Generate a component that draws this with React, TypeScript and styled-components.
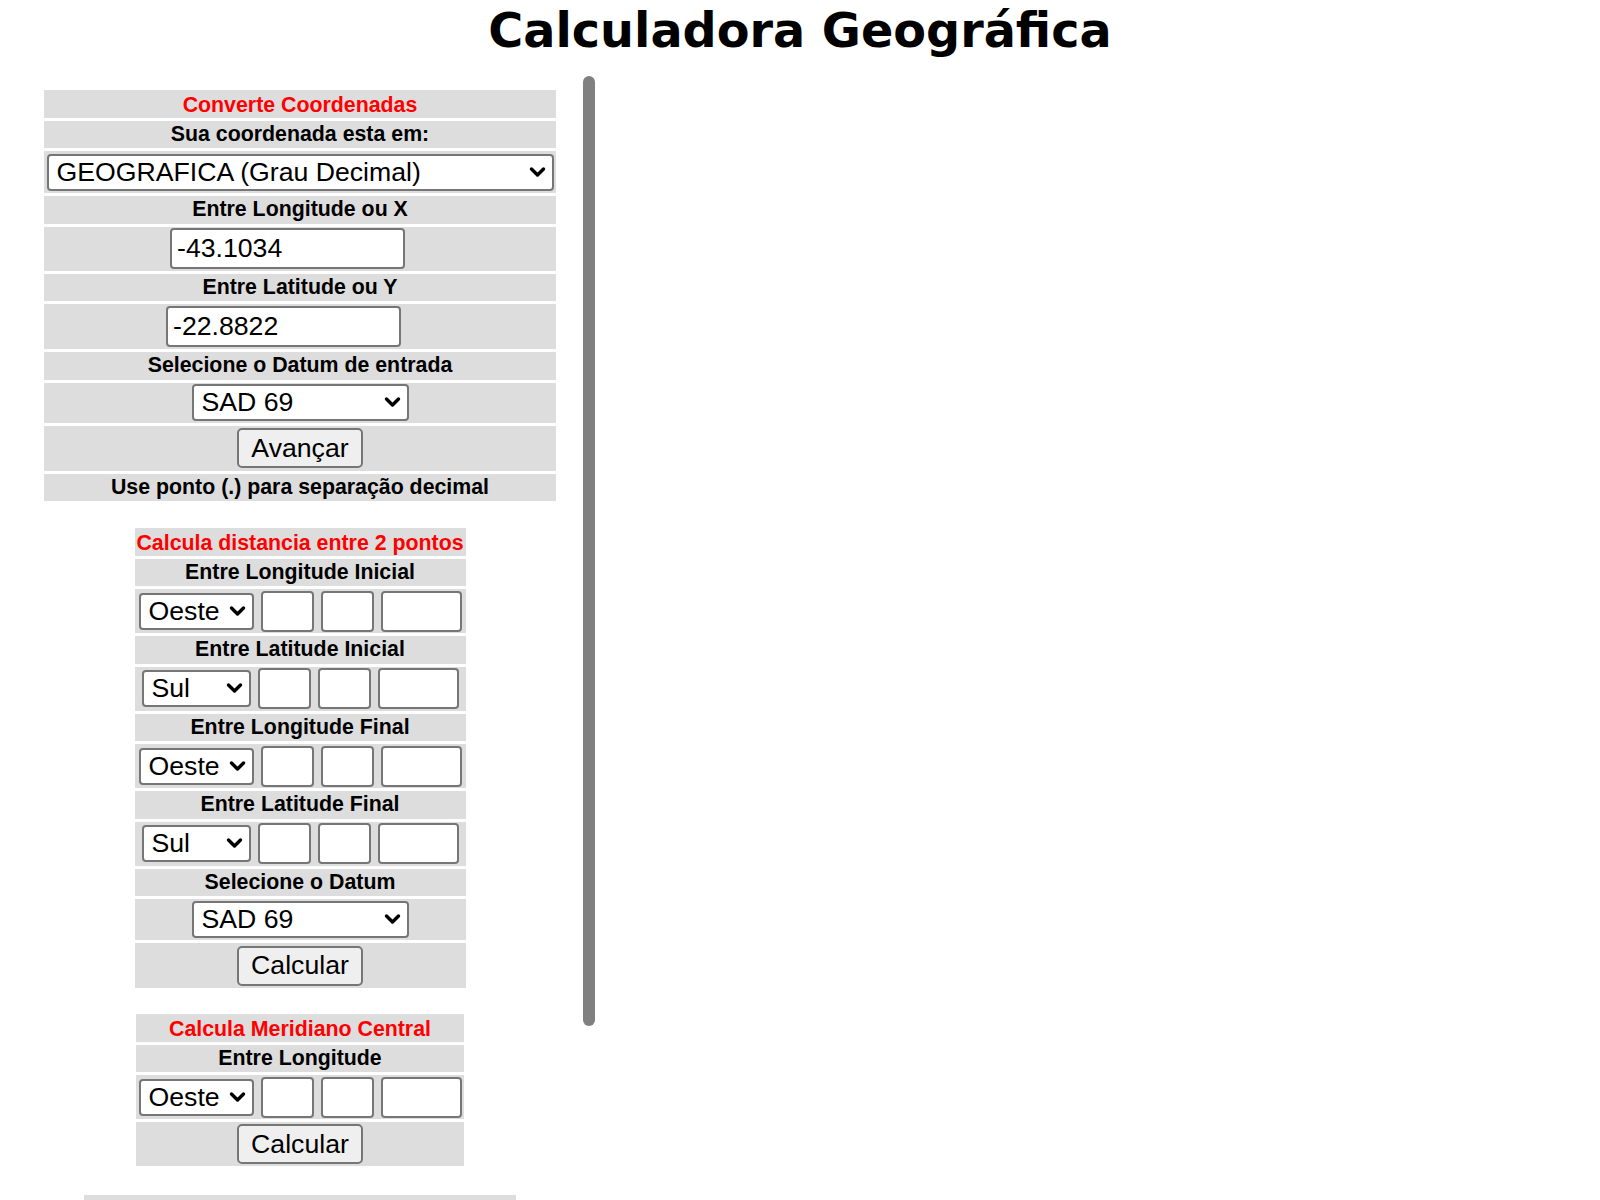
import React from "react";
import styled, { createGlobalStyle } from "styled-components";

const GlobalStyle = createGlobalStyle`
  body {
    margin: 0;
    background: #ffffff;
    color: #000000;
    font-family: "Liberation Sans", Arial, sans-serif;
  }
`;

const Page = styled.div`
  width: 1600px;
`;

const Title = styled.h1`
  margin: 0;
  font-family: "DejaVu Sans", Verdana, sans-serif;
  font-size: 47.7px;
  font-weight: bold;
  line-height: 62px;
  text-align: center;
`;

const Layout = styled.div`
  display: flex;
  margin-top: 8px;
`;

const Panel = styled.div`
  position: relative;
  width: 600px;
  display: flex;
  flex-direction: column;
  align-items: center;
  padding-top: 20px;
`;

const ScrollThumb = styled.div`
  position: absolute;
  top: 6px;
  right: 5px;
  width: 12px;
  height: 950px;
  border-radius: 6px;
  background: #808080;
`;

const Card = styled.div<{ $width: number; $gapAfter?: number }>`
  width: ${(p) => p.$width}px;
  display: flex;
  flex-direction: column;
  gap: 3px;
  margin-bottom: ${(p) => p.$gapAfter ?? 0}px;
`;

const TextRow = styled.div<{ $accent?: boolean }>`
  height: 27.5px;
  line-height: ${(p) => (p.$accent ? "30px" : "27.5px")};
  background: #dddddd;
  text-align: center;
  white-space: nowrap;
  font-size: 21.33px;
  font-weight: bold;
  color: ${(p) => (p.$accent ? "#ff0000" : "#000000")};
`;

const ControlRow = styled.div<{ $height: number; $shift?: number }>`
  height: ${(p) => p.$height}px;
  background: #dddddd;
  display: flex;
  align-items: center;
  justify-content: center;
  gap: 7px;
  padding-right: ${(p) => p.$shift ?? 0}px;
`;

const SelectWrap = styled.span<{ $width: number }>`
  position: relative;
  display: inline-flex;
  width: ${(p) => p.$width}px;
  height: 37px;
`;

const NativeSelect = styled.select`
  appearance: none;
  -webkit-appearance: none;
  width: 100%;
  height: 100%;
  box-sizing: border-box;
  margin: 0;
  padding: 0 30px 0 8px;
  border: 2px solid #767676;
  border-radius: 4px;
  background: #ffffff;
  color: #000000;
  font-family: "Liberation Sans", Arial, sans-serif;
  font-size: 26.67px;
  line-height: 33px;
`;

const Chevron = styled.svg`
  position: absolute;
  right: 8px;
  top: 12px;
  width: 17px;
  height: 12px;
  pointer-events: none;
`;

const Field = styled.input<{ $width: number }>`
  width: ${(p) => p.$width}px;
  height: 41px;
  box-sizing: border-box;
  margin: 0;
  padding: 0 5px;
  border: 2px solid #767676;
  border-radius: 4px;
  background: #ffffff;
  color: #000000;
  font-family: "Liberation Sans", Arial, sans-serif;
  font-size: 26.67px;
`;

const Button = styled.button`
  width: 126px;
  height: 40px;
  box-sizing: border-box;
  margin: 0;
  padding: 0;
  border: 2px solid #767676;
  border-radius: 5px;
  background: #efefef;
  color: #000000;
  font-family: "Liberation Sans", Arial, sans-serif;
  font-size: 26.67px;
`;

type SelectProps = { width: number; value: string; options: string[] };

const Select: React.FC<SelectProps> = ({ width, value, options }) => (
  <SelectWrap $width={width}>
    <NativeSelect defaultValue={value}>
      {options.map((o) => (
        <option key={o}>{o}</option>
      ))}
    </NativeSelect>
    <Chevron viewBox="0 0 17 12">
      <path
        d="M2.5 3 L8.5 9 L14.5 3"
        fill="none"
        stroke="#000"
        strokeWidth="3.4"
        strokeLinecap="round"
        strokeLinejoin="round"
      />
    </Chevron>
  </SelectWrap>
);

const datums = ["SAD 69", "SIRGAS 2000", "WGS 84", "Córrego Alegre"];

const DmsRow: React.FC<{ dir: "lon" | "lat" }> = ({ dir }) => (
  <ControlRow $height={44}>
    {dir === "lon" ? (
      <Select width={115} value="Oeste" options={["Oeste", "Leste"]} />
    ) : (
      <Select width={109} value="Sul" options={["Sul", "Norte"]} />
    )}
    <Field $width={53} />
    <Field $width={53} />
    <Field $width={81} />
  </ControlRow>
);

export default function App() {
  return (
    <Page>
      <GlobalStyle />
      <Title>Calculadora Geográfica</Title>
      <Layout>
        <Panel>
          <ScrollThumb />

          <Card $width={512} $gapAfter={27}>
            <TextRow $accent>Converte Coordenadas</TextRow>
            <TextRow>Sua coordenada esta em:</TextRow>
            <ControlRow $height={42}>
              <Select
                width={507}
                value="GEOGRAFICA (Grau Decimal)"
                options={[
                  "GEOGRAFICA (Grau Decimal)",
                  "GEOGRAFICA (Grau Min Seg)",
                  "UTM",
                ]}
              />
            </ControlRow>
            <TextRow>Entre Longitude ou X</TextRow>
            <ControlRow $height={44} $shift={25}>
              <Field $width={235} defaultValue="-43.1034" />
            </ControlRow>
            <TextRow>Entre Latitude ou Y</TextRow>
            <ControlRow $height={45} $shift={33}>
              <Field $width={235} defaultValue="-22.8822" />
            </ControlRow>
            <TextRow>Selecione o Datum de entrada</TextRow>
            <ControlRow $height={40}>
              <Select width={217} value="SAD 69" options={datums} />
            </ControlRow>
            <ControlRow $height={45}>
              <Button>Avançar</Button>
            </ControlRow>
            <TextRow>Use ponto (.) para separação decimal</TextRow>
          </Card>

          <Card $width={331} $gapAfter={26}>
            <TextRow $accent>Calcula distancia entre 2 pontos</TextRow>
            <TextRow>Entre Longitude Inicial</TextRow>
            <DmsRow dir="lon" />
            <TextRow>Entre Latitude Inicial</TextRow>
            <DmsRow dir="lat" />
            <TextRow>Entre Longitude Final</TextRow>
            <DmsRow dir="lon" />
            <TextRow>Entre Latitude Final</TextRow>
            <DmsRow dir="lat" />
            <TextRow>Selecione o Datum</TextRow>
            <ControlRow $height={41}>
              <Select width={217} value="SAD 69" options={datums} />
            </ControlRow>
            <ControlRow $height={45}>
              <Button>Calcular</Button>
            </ControlRow>
          </Card>

          <Card $width={328} $gapAfter={29}>
            <TextRow $accent>Calcula Meridiano Central</TextRow>
            <TextRow>Entre Longitude</TextRow>
            <DmsRow dir="lon" />
            <ControlRow $height={44}>
              <Button>Calcular</Button>
            </ControlRow>
          </Card>

          <Card $width={432}>
            <TextRow>&nbsp;</TextRow>
          </Card>
        </Panel>
      </Layout>
    </Page>
  );
}
